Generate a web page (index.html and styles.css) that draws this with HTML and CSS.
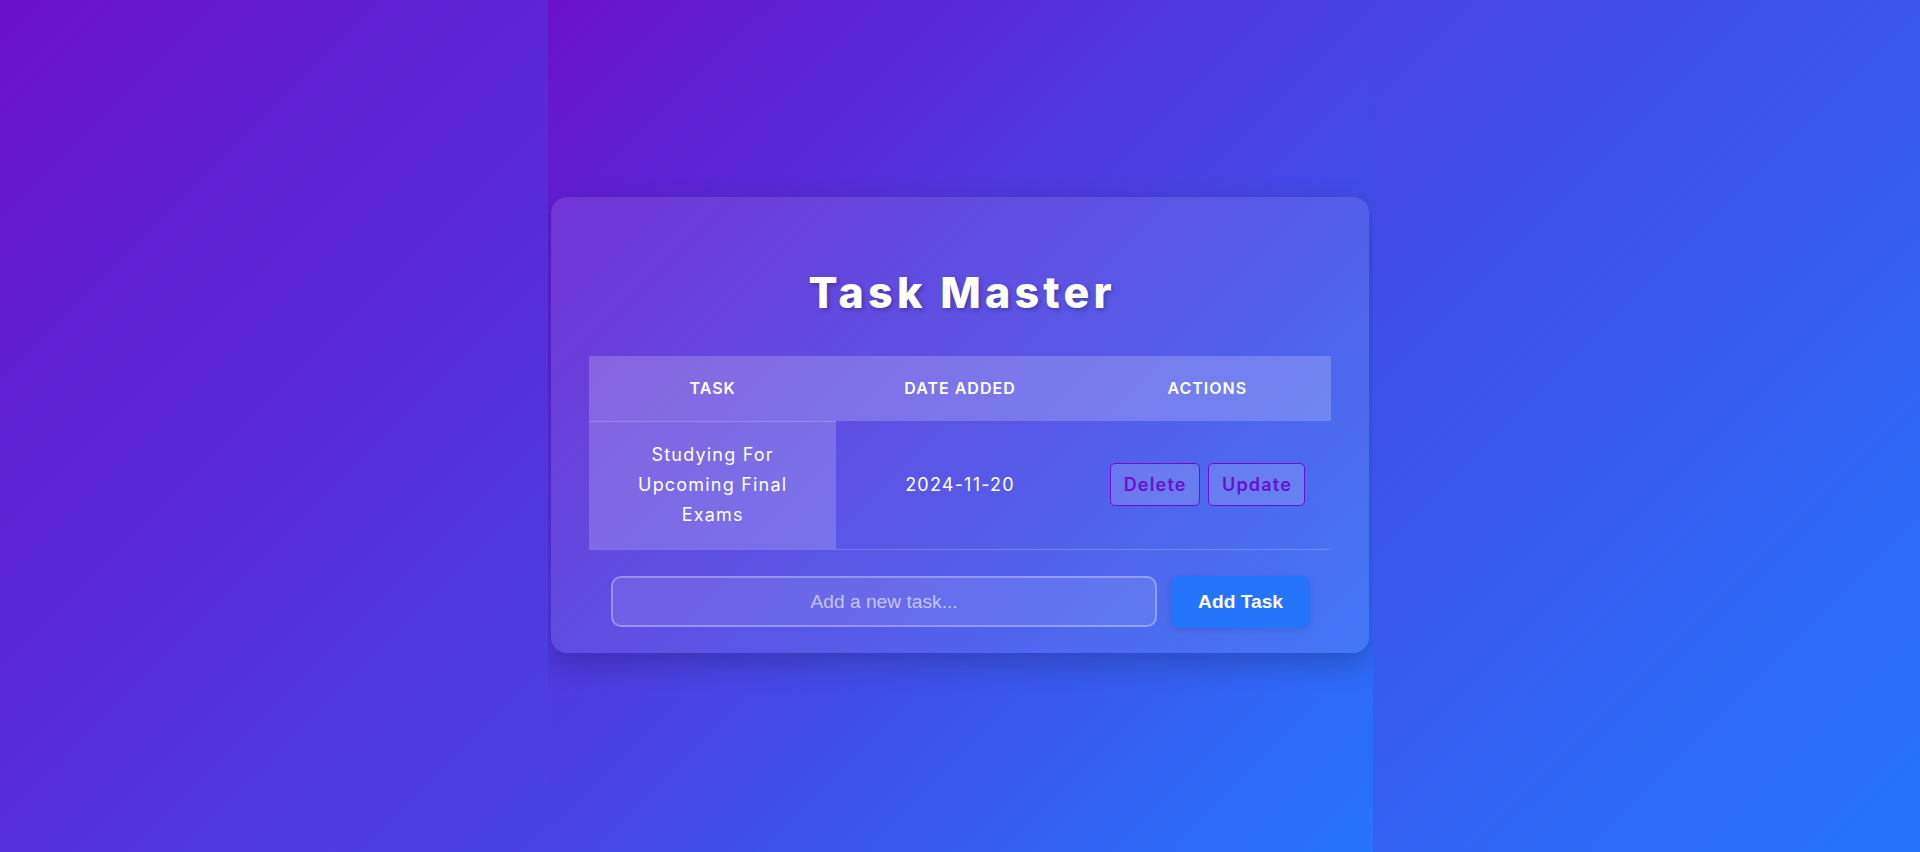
FILE: index.html
```html
<!DOCTYPE html>
<html lang="en">
<head>
<meta charset="UTF-8">
<title>Task Master</title>
<link rel="stylesheet" href="styles.css">
</head>
<body>
  <main class="card">
    <h1 class="title">Task Master</h1>
    <table class="tasks">
      <thead>
        <tr>
          <th>Task</th>
          <th>Date Added</th>
          <th>Actions</th>
        </tr>
      </thead>
      <tbody>
        <tr>
          <td class="task-name"><span class="task-text">Studying For Upcoming Final Exams</span></td>
          <td>2024-11-20</td>
          <td class="actions">
            <button class="act-btn">Delete</button>
            <button class="act-btn">Update</button>
          </td>
        </tr>
      </tbody>
    </table>
    <form class="add-form">
      <input class="add-input" type="text" placeholder="Add a new task...">
      <button class="add-btn" type="button">Add Task</button>
    </form>
  </main>
</body>
</html>
```

FILE: styles.css
```css
html {
  height: 100%;
  background: linear-gradient(135deg, #6a11cb, #2575fc);
}

body {
  margin: 0 auto;
  width: 825px;
  min-height: 100vh;
  background: linear-gradient(135deg, #6a11cb, #2575fc);
  display: flex;
  align-items: center;
  justify-content: center;
  font-family: "Inter", "Liberation Sans", sans-serif;
  color: #fff;
}

.card {
  width: 818px;
  box-sizing: border-box;
  padding: 70px 38px 25px;
  background: rgba(255, 255, 255, 0.1);
  border-radius: 16px;
  box-shadow: 0 10px 30px rgba(0, 0, 0, 0.2);
  margin-top: -3px;
}

.title {
  margin: 0 0 39px;
  text-align: center;
  font-size: 43px;
  line-height: 50px;
  font-weight: 800;
  letter-spacing: 4.2px;
  text-indent: 4.2px;
  text-shadow: 2px 2px 4px rgba(0, 0, 0, 0.25);
}

.tasks {
  width: 100%;
  border-collapse: collapse;
  table-layout: fixed;
  text-align: center;
}

.tasks th {
  background: rgba(255, 255, 255, 0.2);
  padding: 20px 15px;
  line-height: 25px;
  font-size: 16px;
  font-weight: 600;
  letter-spacing: 1px;
  text-transform: uppercase;
}

.tasks td {
  padding: 19px 15px;
  line-height: 30px;
  font-size: 18px;
  font-weight: 400;
  letter-spacing: 1.2px;
  border-bottom: 1px solid rgba(255, 255, 255, 0.2);
}

.tasks td.task-name {
  background: rgba(255, 255, 255, 0.18);
  box-shadow: inset 0 1px 0 rgba(255, 255, 255, 0.2);
}

.task-text {
  display: inline-block;
  width: 175px;
}

.actions {
  white-space: nowrap;
}

.act-btn {
  font-family: "Inter", "Liberation Sans", sans-serif;
  font-size: 18px;
  font-weight: 600;
  letter-spacing: 1.2px;
  line-height: 25px;
  color: #6a11cb;
  background: rgba(255, 255, 255, 0.15);
  border: 1px solid #6a11cb;
  border-radius: 5px;
  padding: 8px 12px 8px 13px;
  margin: 0 1px;
}

.add-form {
  margin: 26px 0 0;
  padding: 0 21px 0 22px;
  display: flex;
  align-items: center;
  gap: 14px;
}

.add-input {
  flex: 1;
  height: 51px;
  box-sizing: border-box;
  border: 2px solid rgba(255, 255, 255, 0.3);
  border-radius: 10px;
  background: rgba(255, 255, 255, 0.1);
  color: #fff;
  font-family: "Liberation Sans", Arial, sans-serif;
  font-size: 19.2px;
  text-align: center;
  outline: none;
}

.add-input::placeholder {
  color: rgba(255, 255, 255, 0.62);
}

.add-btn {
  height: 52px;
  padding: 0 27px;
  border: none;
  border-radius: 8px;
  background: #2575fc;
  color: #fff;
  font-family: "Liberation Sans", Arial, sans-serif;
  font-size: 19.2px;
  font-weight: 700;
  box-shadow: 0 2px 6px rgba(0, 0, 0, 0.1);
}
```
